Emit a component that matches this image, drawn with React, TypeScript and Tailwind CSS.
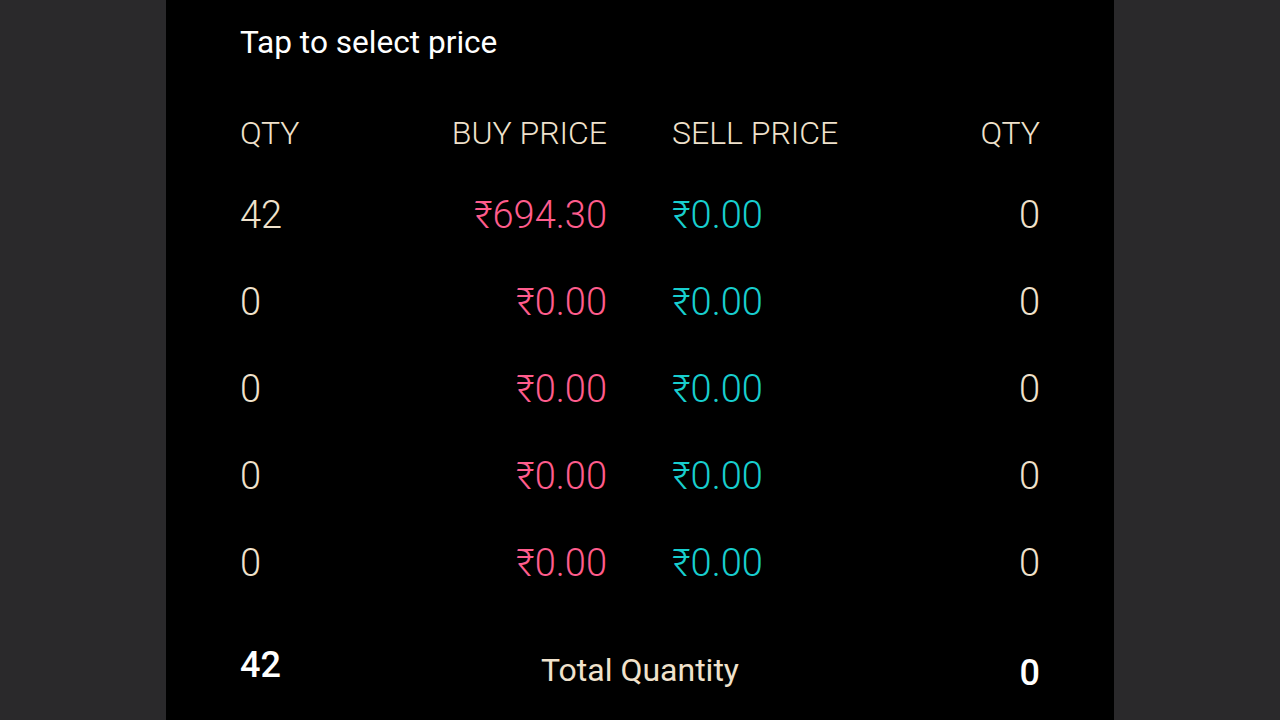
import React from "react";

const rows = [
  { bq: "42", bp: "₹694.30", sp: "₹0.00", sq: "0" },
  { bq: "0", bp: "₹0.00", sp: "₹0.00", sq: "0" },
  { bq: "0", bp: "₹0.00", sp: "₹0.00", sq: "0" },
  { bq: "0", bp: "₹0.00", sp: "₹0.00", sq: "0" },
  { bq: "0", bp: "₹0.00", sp: "₹0.00", sq: "0" },
];

export default function App() {
  return (
    <div
      className="w-[1280px] h-[720px] bg-[#2a292b] flex justify-center overflow-hidden"
      style={{ fontFamily: "Roboto, 'Noto Sans', sans-serif" }}
    >
      <div className="w-[948px] h-full bg-black px-[74px]">
        <div className="pt-[23px] h-[63px] text-white text-[31.6px] font-normal leading-[40px]">
          Tap to select price
        </div>
        <div className="mt-[50px] grid grid-cols-4 text-[#f0e2cc] text-[32px] font-light leading-[40px] h-[40px]">
          <div>QTY</div>
          <div className="text-right pr-[33px]">BUY PRICE</div>
          <div className="pl-[32px]">SELL PRICE</div>
          <div className="text-right">QTY</div>
        </div>
        <div className="mt-[42px] flex flex-col gap-[47px]">
          {rows.map((r, i) => (
            <div key={i} className="grid grid-cols-4 text-[38px] font-light leading-[40px] h-[40px]">
              <div className="text-[#f0e2cc]">{r.bq}</div>
              <div className="text-right pr-[33px] text-[#ff5c8c]">{r.bp}</div>
              <div className="pl-[32px] text-[#18cece]">{r.sp}</div>
              <div className="text-right text-[#f0e2cc]">{r.sq}</div>
            </div>
          ))}
        </div>
        <div className="mt-[62px] grid grid-cols-[1fr_auto_1fr] items-start h-[60px]">
          <div className="text-white text-[36px] font-medium leading-[40px]">42</div>
          <div className="text-[#f0e2cc] text-[32px] font-normal leading-[40px] mt-[5px] text-center">
            Total Quantity
          </div>
          <div className="text-white text-[36px] font-medium leading-[40px] mt-[8px] text-right">0</div>
        </div>
      </div>
    </div>
  );
}
